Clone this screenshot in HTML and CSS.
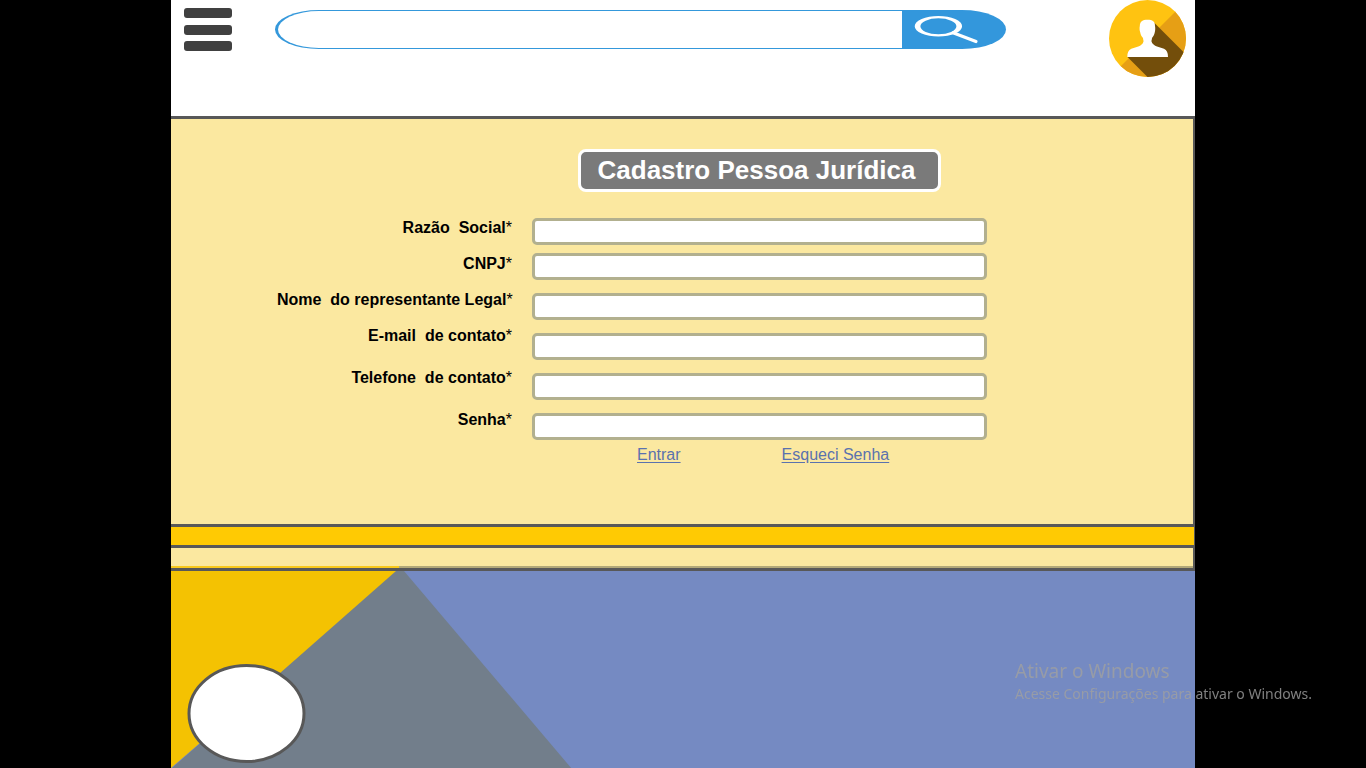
FILE: index.html
```html
<!DOCTYPE html>
<html lang="pt-BR">
<head>
<meta charset="utf-8">
<meta name="viewport" content="width=device-width, initial-scale=1">
<title>Cadastro Pessoa Jurídica</title>
<link rel="stylesheet" href="styles.css">
</head>
<body>
<div class="page">
  <header class="topbar">
    <button class="menu" type="button" aria-label="Menu">
      <span class="menu-bar"></span>
      <span class="menu-bar"></span>
      <span class="menu-bar"></span>
    </button>
    <form class="search" role="search">
      <input class="search-input" type="search" aria-label="Pesquisar">
      <button class="search-button" type="submit" aria-label="Pesquisar">
        <svg class="search-icon" viewBox="0 0 104 39" aria-hidden="true">
          <path fill="#fff" fill-rule="evenodd" d="M12.700 16.300a23.700 10.300 0 1 0 47.400 0a23.700 10.300 0 1 0 -47.400 0zM18.400 16.300a18 8 0 1 0 36 0a18 8 0 1 0 -36 0z"/>
          <path fill="none" stroke="#fff" stroke-width="3.200" stroke-linecap="round" d="M51 22.800L74 31.500"/>
        </svg>
      </button>
    </form>
    <a class="avatar" href="#" aria-label="Perfil">
      <svg class="avatar-icon" viewBox="0 0 77 77" aria-hidden="true">
        <defs><clipPath id="disc"><circle cx="38.5" cy="38.5" r="38.5"/></clipPath></defs>
        <g clip-path="url(#disc)">
          <rect width="77" height="77" fill="#ffc311"/>
          <path fill="#e69f15" d="M68 10L10 68L20 77H77V10z"/>
          <path fill="#734e0b" d="M45.500 23L77 54.500V77H38.500L18.500 57L36 48z"/>
          <path fill="#fff" d="M38.500 19.700C43.500 19.700 46.200 21.500 46 26C46.400 28 46.300 30.500 45.800 32.200C45.300 34.500 44.300 36.500 43 38C43 39.500 42.300 40.500 42.500 41.500C43.200 44 45.500 45.600 48 46.400L55 48.700C57.800 49.900 59 52.500 59 57H18.300C18.300 52.500 19.500 49.900 22.300 48.700L29.300 46.400C31.800 45.600 34 44 34.500 41.500C34.700 40.500 34 39.500 34 38C32.500 36.500 31.600 34.500 31.200 32.200C30.500 30.500 30.400 28 30.800 26C30.800 21.500 33.500 19.700 38.500 19.700z"/>
        </g>
      </svg>
    </a>
  </header>

  <main class="panel">
    <form class="signup">
      <h1 class="title">Cadastro Pessoa Jurídica</h1>
      <div class="labels">
        <label for="razao">Razão&nbsp; Social<span class="star">*</span></label>
        <label for="cnpj">CNPJ<span class="star">*</span></label>
        <label for="nome">Nome&nbsp; do representante Legal<span class="star">*</span></label>
        <label for="email">E-mail&nbsp; de contato<span class="star">*</span></label>
        <label class="spaced" for="telefone">Telefone&nbsp; de contato<span class="star">*</span></label>
        <label class="spaced" for="senha">Senha<span class="star">*</span></label>
      </div>
      <div class="fields">
        <input class="field field-first" id="razao" type="text">
        <input class="field" id="cnpj" type="text">
        <input class="field" id="nome" type="text">
        <input class="field" id="email" type="email">
        <input class="field" id="telefone" type="tel">
        <input class="field" id="senha" type="password">
      </div>
      <nav class="links">
        <a href="#">Entrar</a>
        <a href="#">Esqueci Senha</a>
      </nav>
    </form>
  </main>

  <div class="band"></div>
  <div class="strip"></div>

  <footer class="footer">
    <svg class="scene" viewBox="0 0 1024 197" preserveAspectRatio="xMinYMin slice" aria-hidden="true">
      <rect width="1024" height="197" fill="#758ac2"/>
      <path fill="#f4c202" d="M0 0H228L0 197z"/>
      <path fill="#727e8b" d="M0 198L225 0H233L401 198z"/>
      <ellipse cx="75.500" cy="142.500" rx="57.500" ry="48" fill="#fff" stroke="#585858" stroke-width="3"/>
    </svg>
  </footer>
</div>

<aside class="activation">
  <p class="activation-title">Ativar o Windows</p>
  <p class="activation-text">Acesse Configurações para ativar o Windows.</p>
</aside>
</body>
</html>
```

FILE: styles.css
```css
* {
  box-sizing: border-box;
}

body {
  margin: 0;
  background: #000;
  font-family: "Liberation Sans", Arial, sans-serif;
  font-size: 16px;
}

.page {
  display: flex;
  flex-direction: column;
  max-width: 1024px;
  min-height: 100vh;
  margin: 0 auto;
  background: #fff;
}

.topbar {
  display: flex;
  align-items: flex-start;
  padding: 0 9px 39px 13px;
}

.menu {
  display: flex;
  flex-direction: column;
  justify-content: space-between;
  width: 48px;
  height: 43px;
  margin-top: 8px;
  padding: 0;
  border: 0;
  background: none;
}

.menu-bar {
  width: 100%;
  height: 10px;
  border-radius: 3px;
  background: #404040;
}

.search {
  display: flex;
  flex: 1;
  height: 39px;
  margin: 10px 103px 0 43px;
}

.search-input {
  flex: 1;
  min-width: 0;
  padding: 0 24px;
  border: solid #3498db;
  border-width: 1px 0 1px 3px;
  border-radius: 45px 0 0 45px / 20px 0 0 20px;
  background: #fff;
  font: inherit;
}

.search-button {
  width: 104px;
  padding: 0;
  border: 0;
  border-radius: 0 45px 45px 0 / 0 20px 20px 0;
  background: #3397dc;
}

.search-icon,
.avatar-icon,
.scene {
  display: block;
  width: 100%;
  height: 100%;
}

.avatar {
  width: 77px;
  height: 77px;
}

.panel {
  padding: 30px 0 59px 106px;
  border: solid #585858;
  border-width: 3px 2px 0 0;
  background: #fbe8a0;
}

.signup {
  display: grid;
  grid-template-columns: 235px minmax(0, 455px);
  column-gap: 20px;
}

.title {
  grid-column: 2;
  justify-self: center;
  margin: 0 0 26px;
  padding: 0 23px 0 17px;
  border: 3px solid #fff;
  border-radius: 8px;
  background: #7a7a7a;
  color: #fff;
  font-size: 26px;
  line-height: 37px;
}

.labels {
  display: flex;
  flex-direction: column;
  gap: 18px;
  padding-top: 1px;
  font-weight: bold;
  line-height: 18px;
  text-align: right;
  white-space: nowrap;
}

.spaced {
  margin-top: 6px;
}

.star {
  font-weight: normal;
}

.fields {
  display: flex;
  flex-direction: column;
  gap: 13px;
}

.field {
  width: 100%;
  height: 27px;
  padding: 0 8px;
  border: 3px solid #b2b08f;
  border-radius: 5px;
  background: #fff;
  font: inherit;
}

.field-first {
  margin-bottom: -5px;
}

.links {
  display: flex;
  grid-column: 2;
  gap: 101px;
  padding: 5px 0 0 105px;
  line-height: 20px;
}

.links a {
  color: #5a72ae;
  text-underline-offset: 2px;
}

.band {
  height: 24px;
  border: solid #585858;
  border-width: 3px 1px 3px 0;
  background: #ffca03;
}

.strip {
  height: 23px;
  border: solid #585858;
  border-width: 0 2px 3px 0;
  background:
    linear-gradient(to right, #f8c81c 228px, #b2a878 228px) bottom / 100% 2px no-repeat,
    #fbe8a0;
}

.footer {
  flex: 1;
  height: 197px;
}

.activation {
  position: fixed;
  right: 54px;
  bottom: 64px;
  color: #a0a0a0;
  font-family: "Noto Sans", "Open Sans", sans-serif;
  opacity: 0.8;
  pointer-events: none;
}

.activation p {
  margin: 0;
}

.activation-title {
  font-size: 19px;
  line-height: 26px;
}

.activation-text {
  font-size: 14px;
  line-height: 20px;
}
```
